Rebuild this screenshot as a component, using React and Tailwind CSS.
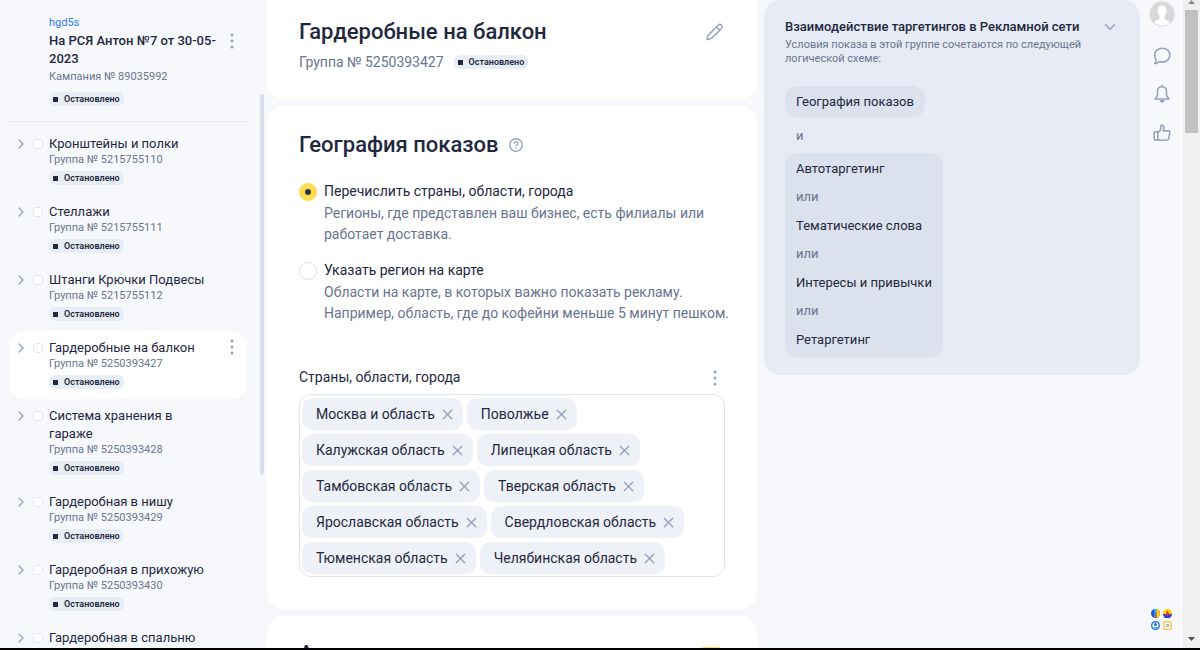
import React, { useState } from 'react';
import { ChevronRight, ChevronDown, X } from 'lucide-react';

const groups = [
  { id: '5215755110', name: 'Кронштейны и полки' },
  { id: '5215755111', name: 'Стеллажи' },
  { id: '5215755112', name: 'Штанги Крючки Подвесы' },
  { id: '5250393427', name: 'Гардеробные на балкон' },
  { id: '5250393428', name: 'Система хранения в гараже' },
  { id: '5250393429', name: 'Гардеробная в нишу' },
  { id: '5250393430', name: 'Гардеробная в прихожую' },
  { id: '5250393431', name: 'Гардеробная в спальню' },
];

const initialRegions = [
  'Москва и область',
  'Поволжье',
  'Калужская область',
  'Липецкая область',
  'Тамбовская область',
  'Тверская область',
  'Ярославская область',
  'Свердловская область',
  'Тюменская область',
  'Челябинская область',
];

const options = [
  {
    value: 'list',
    title: 'Перечислить страны, области, города',
    text: 'Регионы, где представлен ваш бизнес, есть филиалы или работает доставка.',
  },
  {
    value: 'map',
    title: 'Указать регион на карте',
    text: 'Области на карте, в которых важно показать рекламу. Например, область, где до кофейни меньше 5 минут пешком.',
  },
];

const targetings = ['Автотаргетинг', 'Тематические слова', 'Интересы и привычки', 'Ретаргетинг'];

const Kebab = ({ label }) => (
  <button type="button" aria-label={label} className="shrink-0 text-[#98a3bf]">
    <svg width="4" height="16" viewBox="0 0 4 16" fill="currentColor">
      <circle cx="2" cy="2" r="1.5" />
      <circle cx="2" cy="8" r="1.5" />
      <circle cx="2" cy="14" r="1.5" />
    </svg>
  </button>
);

const StatusBadge = () => (
  <span className="inline-flex h-3.5 w-fit items-center gap-1.5 rounded-md bg-[#e8edf5] px-1 text-[9px] leading-none font-semibold text-[#1f2840]">
    <span className="h-[5px] w-[5px] bg-[#1f2840]" />
    Остановлено
  </span>
);

const GroupItem = ({ group, active }) => (
  <li className={`flex items-start rounded-2xl pt-2 pr-[13px] pb-2.5 pl-1 ${active ? 'bg-white' : ''}`}>
    <button type="button" aria-label="Развернуть" className="flex h-[18px] w-5 shrink-0 items-center text-[#98a3bf]">
      <ChevronRight size={16} strokeWidth={2} />
    </button>
    <input
      type="checkbox"
      aria-label={group.name}
      className="mt-1 mr-1.5 h-2.5 w-2.5 shrink-0 appearance-none rounded-[3px] border border-[#e3e7f0] bg-white checked:bg-[#ffdb4d]"
    />
    <div className="flex min-w-0 flex-1 flex-col">
      <a href="#" className="max-w-[160px] text-[13px] leading-[18px] text-[#1f2840]">{group.name}</a>
      <span className="mb-1 text-[11px] leading-[14px] text-[#69758f]">Группа № {group.id}</span>
      <StatusBadge />
    </div>
    {active && <Kebab label="Действия с группой" />}
  </li>
);

const Sidebar = () => (
  <aside className="relative w-[267px] shrink-0 overflow-hidden pl-[9px] pr-5">
    <div className="flex items-start border-b border-[#e6eaf2] pt-4 pr-[13px] pb-[15px] pl-10">
      <div className="flex flex-1 flex-col">
        <a href="#" className="mb-0.5 text-[11px] leading-[14px] text-[#2e7cf6]">hgd5s</a>
        <h2 className="text-[13px] leading-[18px] font-medium text-[#1f2840]">На РСЯ Антон №7 от 30-05-2023</h2>
        <span className="mt-0.5 mb-2 text-[11px] leading-[14px] text-[#69758f]">Кампания № 89035992</span>
        <StatusBadge />
      </div>
      <div className="pt-4">
        <Kebab label="Действия с кампанией" />
      </div>
    </div>
    <ul className="pt-[5px]">
      {groups.map((group) => (
        <GroupItem key={group.id} group={group} active={group.id === '5250393427'} />
      ))}
    </ul>
    <div className="absolute top-[94px] right-[3px] h-[381px] w-1 rounded-full bg-[#d9dfeb]" />
  </aside>
);

const GroupHeader = () => (
  <header className="flex items-start justify-between rounded-b-2xl bg-white px-8 pt-[17px] pb-[27px]">
    <div>
      <h1 className="text-[22px] leading-[30px] font-medium text-[#1f2840]">Гардеробные на балкон</h1>
      <div className="mt-[5px] flex items-center gap-2.5">
        <span className="text-sm text-[#69758f]">Группа № 5250393427</span>
        <StatusBadge />
      </div>
    </div>
    <button type="button" aria-label="Изменить название" className="mt-[5px] text-[#98a3bf]">
      <svg width="20" height="20" viewBox="0 0 20 20" fill="none" stroke="currentColor" strokeWidth="1.5" strokeLinejoin="round">
        <path d="M2 17.500c.2-2 .7-3.700 1.800-4.900L13.200 3.200a2.300 2.300 0 0 1 3.300 3.300L7 15.900c-1.200 1-3 1.500-5 1.600Z" />
        <path d="M12 4.500c.2 2 1.300 3.100 3.300 3.300" />
      </svg>
    </button>
  </header>
);

const GeoSection = () => {
  const [mode, setMode] = useState('list');
  const [regions, setRegions] = useState(initialRegions);

  const removeRegion = (name) => setRegions(regions.filter((region) => region !== name));

  return (
    <section className="rounded-2xl bg-white px-8 pt-6 pb-8">
      <div className="flex items-center gap-2.5">
        <h2 className="text-[22px] leading-[30px] font-medium text-[#1f2840]">География показов</h2>
        <button type="button" aria-label="Справка" className="text-[#98a3bf]">
          <svg width="14" height="14" viewBox="0 0 14 14" fill="none" stroke="currentColor" strokeWidth="1.4">
            <circle cx="7" cy="7" r="6.2" />
            <path d="M5.2 5.6a1.8 1.8 0 1 1 2.6 1.6c-.6.3-.8.6-.8 1.1M7 9.4v1.3" />
          </svg>
        </button>
      </div>

      <div className="-mr-4 mt-[21px] flex flex-col gap-[15px]">
        {options.map((option) => (
          <label key={option.value} className="flex items-start gap-[7px] text-sm leading-[21px]">
            <input
              type="radio"
              name="geo"
              value={option.value}
              checked={mode === option.value}
              onChange={() => setMode(option.value)}
              className="mt-0.5 h-[18px] w-[18px] shrink-0 appearance-none rounded-full border border-[#d9dfeb] bg-white checked:border-[6px] checked:border-[#ffdb4d] checked:bg-[#2b3450]"
            />
            <span>
              <span className="block text-[#1f2840]">{option.title}</span>
              <span className="mt-px block text-[#69758f]">{option.text}</span>
            </span>
          </label>
        ))}
      </div>

      <div className="mt-[43px] flex items-center justify-between pr-2">
        <h3 className="text-sm leading-[21px] text-[#1f2840]">Страны, области, города</h3>
        <Kebab label="Действия со списком" />
      </div>
      <ul className="mt-1.5 flex flex-wrap gap-1 rounded-xl border border-[#e0e4ee] px-0.5 pt-[3px] pb-0.5">
        {regions.map((region) => (
          <li key={region} className="flex h-8 items-center gap-1 rounded-[10px] bg-[#eef1f7] pr-[7px] pl-3.5 text-sm text-[#1f2840]">
            {region}
            <button type="button" aria-label={`Удалить ${region}`} onClick={() => removeRegion(region)} className="text-[#98a3bf]">
              <X size={17} strokeWidth={2} />
            </button>
          </li>
        ))}
      </ul>
    </section>
  );
};

const AutoSection = () => (
  <section className="rounded-t-2xl bg-white px-8 pt-[23px]">
    <div className="flex items-start justify-between">
      <h2 className="text-[22px] leading-[30px] font-medium text-[#1f2840]">Автотаргетинг</h2>
      <button type="button" role="switch" aria-checked="true" aria-label="Автотаргетинг" className="mt-2 flex h-4 w-7 justify-end rounded-full bg-[#ffdb4d] p-0.5">
        <span className="h-3 w-3 rounded-full bg-white" />
      </button>
    </div>
  </section>
);

const TargetingPanel = () => (
  <section className="w-[376px] shrink-0 self-start rounded-2xl bg-[#e7ebf5] px-[21px] pt-[17px] pb-[18px]">
    <div className="flex items-center justify-between gap-2">
      <h2 className="text-[13px] leading-5 font-medium whitespace-nowrap text-[#1f2840]">Взаимодействие таргетингов в Рекламной сети</h2>
      <button type="button" aria-label="Свернуть" className="text-[#98a3bf]">
        <ChevronDown size={18} />
      </button>
    </div>
    <p className="mt-px max-w-[300px] text-[11px] leading-[14px] text-[#69758f]">
      Условия показа в этой группе сочетаются по следующей логической схеме:
    </p>
    <div className="mt-5 flex flex-col items-start text-[13px] leading-[29px] text-[#1f2840]">
      <div className="rounded-xl bg-[#dce2ed] px-[11px] py-px">География показов</div>
      <div className="px-[11px] pt-1 pb-[3px] text-[#69758f]">и</div>
      <div className="rounded-xl bg-[#dce2ed] px-[11px] pt-px pb-[3px]">
        {targetings.map((name, i) => (
          <React.Fragment key={name}>
            {i > 0 && <div className="leading-[28px] text-[#69758f]">или</div>}
            <div>{name}</div>
          </React.Fragment>
        ))}
      </div>
    </div>
  </section>
);

const IconRail = () => (
  <nav className="flex w-[43px] shrink-0 flex-col items-center pt-px pb-[18px] text-[#98a3bf]">
    <button type="button" aria-label="Профиль">
      <svg width="26" height="26" viewBox="0 0 26 26">
        <circle cx="13" cy="13" r="12.5" fill="#d8d8d8" />
        <path d="M13 4.500c-3 0-4.600 2-4.400 5 .2 3 1 4.400 2 5.500v2.200c0 1.400-4 1.800-5.600 4.400a12 12 0 0 0 16 0c-1.600-2.600-5.600-3-5.600-4.400V15c1-1.100 1.800-2.500 2-5.500.2-3-1.400-5-4.400-5Z" fill="#fff" />
      </svg>
    </button>
    <button type="button" aria-label="Чат" className="mt-[19px]">
      <svg width="20" height="20" viewBox="0 0 20 20" fill="none" stroke="currentColor" strokeWidth="1.600" strokeLinejoin="round">
        <path d="M10.500 2.200c4.300 0 7.300 2.900 7.300 6.900s-3 7-7.300 7c-1.200 0-2.100-.2-3-.5-1 1.300-2.600 2-5 2 1-.9 1.600-2 1.700-3.600C3 12.700 2.600 11 2.600 9.100c0-4 3.400-6.900 7.900-6.900Z" />
      </svg>
    </button>
    <button type="button" aria-label="Уведомления" className="mt-[18px]">
      <svg width="20" height="20" viewBox="0 0 20 20" fill="none" stroke="currentColor" strokeWidth="1.600" strokeLinejoin="round">
        <path d="M10 2.700c-3 0-4.500 2-4.500 5v3.600c0 1-.8 1.700-2.500 3.700h14c-1.700-2-2.500-2.700-2.500-3.700V7.700c0-3-1.500-5-4.500-5Z" />
        <path d="M10 .8v2" />
        <path d="M7.500 16h5c0 1.600-1 2.600-2.500 2.600s-2.500-1-2.500-2.600Z" fill="currentColor" stroke="none" />
      </svg>
    </button>
    <button type="button" aria-label="Оценить" className="mt-[19px]">
      <svg width="20" height="20" viewBox="0 0 20 20" fill="none" stroke="currentColor" strokeWidth="1.600" strokeLinejoin="round">
        <path d="M5.800 8.700H3.600c-.9 0-1.400.5-1.400 1.400v5.600c0 .9.500 1.400 1.400 1.400h2.200Z" />
        <path d="M5.800 9.500c2-1.200 3.100-2.700 3.100-5V2.600c0-.7 3-.8 3 1.700 0 1.300-.3 2.500-.7 3.600h5.300c1 0 1.500.7 1.300 1.700l-1.100 5.700c-.3 1.400-1.100 2-2.400 2H8.800c-1.200 0-1.800-.1-3-.5" />
      </svg>
    </button>

    <div className="mt-auto grid grid-cols-2 gap-[3px] pr-px">
      <a href="#" aria-label="Метрика">
        <svg width="9" height="9" viewBox="0 0 9 9">
          <circle cx="4.500" cy="4.500" r="4.500" fill="#1f4fe0" />
          <path d="M4.500 0a4.500 4.500 0 0 1 0 9Z" fill="#ffcc00" />
          <path d="M3.200 0h2.200v9H3.200Z" fill="#21b8f5" />
          <path d="M4.200 3.500h1.200v5.400H4.200Z" fill="#e8303a" />
        </svg>
      </a>
      <a href="#" aria-label="Аудитории">
        <svg width="9" height="9" viewBox="0 0 9 9">
          <circle cx="4.500" cy="4.500" r="4.500" fill="#ffd400" />
          <path d="M0 5h9a4.500 4.500 0 0 1-9 0Z" fill="#2445d8" />
          <path d="M4.500 1.500 7 6.200H2Z" fill="#e8303a" />
        </svg>
      </a>
      <a href="#" aria-label="Справка">
        <svg width="9" height="9" viewBox="0 0 9 9">
          <circle cx="4.500" cy="4.500" r="3.800" fill="#fff" stroke="#2f6fe0" strokeWidth="1.400" />
          <circle cx="4.500" cy="3.600" r="1.500" fill="#2f6fe0" />
          <path d="M2.200 7.200a2.400 2.400 0 0 1 4.600 0Z" fill="#21b8f5" />
        </svg>
      </a>
      <a href="#" aria-label="Взгляд">
        <svg width="9" height="9" viewBox="0 0 9 9">
          <rect width="9" height="9" rx="2" fill="#f8cf5a" />
          <rect x="1.500" y="1.500" width="6" height="6" rx="1.500" fill="#fff" />
          <path d="M2.700 3.800h3.600M2.700 5.200h3.600" stroke="#777" strokeWidth=".8" />
        </svg>
      </a>
    </div>
  </nav>
);

const PageScrollbar = () => (
  <div className="flex w-[17px] shrink-0 flex-col items-center justify-between bg-[#f0f0f0] pb-[7px]" aria-hidden="true">
    <div className="flex w-full flex-col items-center">
      <svg width="7" height="10" viewBox="0 0 7 10">
        <path d="M0 4 3.500 0 7 4Z" fill="#8a8a8a" />
      </svg>
      <div className="h-[123px] w-[13px] bg-[#c1c1c1]" />
    </div>
    <svg width="7" height="4" viewBox="0 0 7 4">
      <path d="M0 0h7L3.500 4Z" fill="#505050" />
    </svg>
  </div>
);

export default function App() {
  return (
    <div className="flex h-screen overflow-hidden border-b-2 border-black bg-[#f6f8fc] font-[Roboto,sans-serif]">
      <Sidebar />
      <main className="flex min-w-0 flex-1 flex-col gap-[7px] overflow-hidden *:shrink-0">
        <GroupHeader />
        <GeoSection />
        <AutoSection />
      </main>
      <div className="ml-[7px] flex shrink-0">
        <TargetingPanel />
      </div>
      <IconRail />
      <PageScrollbar />
    </div>
  );
}
